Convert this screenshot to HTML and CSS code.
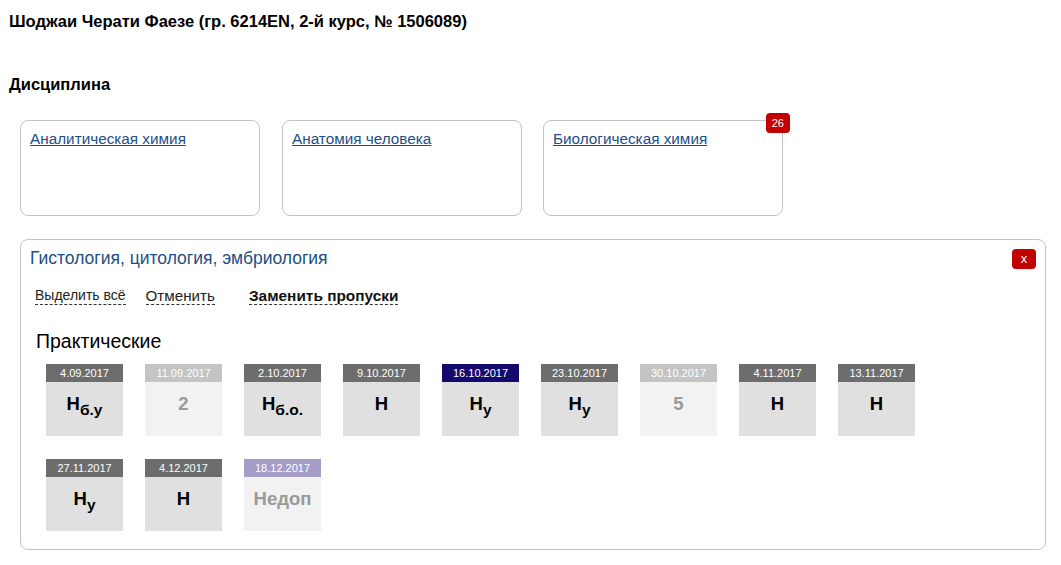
FILE: index.html
```html
<!DOCTYPE html>
<html lang="ru">
<head>
<meta charset="utf-8">
<link rel="stylesheet" href="styles.css">
</head>
<body>
<h1 class="student">Шоджаи Черати Фаезе (гр. 6214EN, 2-й курс, № 1506089)</h1>
<h2 class="section">Дисциплина</h2>
<div class="cards">
  <div class="card"><a href="#">Аналитическая химия</a></div>
  <div class="card"><a href="#">Анатомия человека</a></div>
  <div class="card"><a href="#">Биологическая химия</a><span class="badge">26</span></div>
</div>
<div class="panel">
  <div class="panel-head">
    <span class="panel-title">Гистология, цитология, эмбриология</span>
    <span class="close">x</span>
  </div>
  <div class="actions">
    <span class="act act-select">Выделить всё</span>
    <span class="act act-cancel">Отменить</span>
    <span class="act act-bold">Заменить пропуски</span>
  </div>
  <div class="group-title">Практические</div>
  <div class="tiles">
    <div class="tile"><div class="date">4.09.2017</div><div class="val">Н<sub>б.у</sub></div></div>
    <div class="tile light"><div class="date">11.09.2017</div><div class="val">2</div></div>
    <div class="tile"><div class="date">2.10.2017</div><div class="val">Н<sub>б.о.</sub></div></div>
    <div class="tile"><div class="date">9.10.2017</div><div class="val">Н</div></div>
    <div class="tile active"><div class="date">16.10.2017</div><div class="val">Н<sub>у</sub></div></div>
    <div class="tile"><div class="date">23.10.2017</div><div class="val">Н<sub>у</sub></div></div>
    <div class="tile light"><div class="date">30.10.2017</div><div class="val">5</div></div>
    <div class="tile"><div class="date">4.11.2017</div><div class="val">Н</div></div>
    <div class="tile"><div class="date">13.11.2017</div><div class="val">Н</div></div>
    <div class="tile"><div class="date">27.11.2017</div><div class="val">Н<sub>у</sub></div></div>
    <div class="tile"><div class="date">4.12.2017</div><div class="val">Н</div></div>
    <div class="tile light exam"><div class="date">18.12.2017</div><div class="val">Недоп</div></div>
  </div>
</div>
</body>
</html>
```

FILE: styles.css
```css
html, body {
  margin: 0;
  padding: 0;
  background: #fff;
}
body {
  font-family: "Liberation Sans", Arial, sans-serif;
  color: #000;
  padding: 12px 15px 0 9px;
}
.student {
  font-size: 16.5px;
  font-weight: bold;
  margin: 0;
  line-height: 19px;
}
.section {
  font-size: 16.5px;
  font-weight: bold;
  margin: 44px 0 0 0;
  line-height: 19px;
}
.cards {
  display: flex;
  gap: 22px;
  margin: 26px 0 0 11px;
}
.card {
  position: relative;
  width: 238px;
  height: 94px;
  border: 1px solid #c3c3c3;
  border-radius: 8px;
}
.card:last-child {
  margin-left: -1px;
}
.card a {
  display: inline-block;
  margin: 9px 0 0 9px;
  font-size: 15.3px;
  color: #1d4f86;
  text-decoration: underline;
  line-height: 18px;
}
.badge {
  position: absolute;
  top: -8px;
  right: -8px;
  background: #c20000;
  color: #fff;
  font-size: 11px;
  line-height: 20px;
  height: 20px;
  padding: 0 6px;
  border-radius: 4px;
}
.panel {
  margin: 23px 0 0 11px;
  border: 1px solid #c3c3c3;
  border-radius: 8px;
  padding: 8px 9px 18px 9px;
}
.panel-head {
  display: flex;
  justify-content: space-between;
  align-items: center;
}
.panel-title {
  font-size: 17.5px;
  color: #1d4f86;
  line-height: 21px;
}
.close {
  background: #c20000;
  color: #fff;
  font-size: 13px;
  width: 24px;
  height: 20px;
  line-height: 19px;
  text-align: center;
  border-radius: 4px;
}
.actions {
  display: flex;
  margin: 18px 0 0 5px;
}
.act {
  font-size: 14.5px;
  color: #222;
  line-height: 17px;
  border-bottom: 1px dashed #333;
}
.act-select {
  font-size: 14px;
  margin-right: 20px;
}
.act-cancel {
  font-size: 15.2px;
  margin-right: 34px;
}
.act-bold {
  font-weight: bold;
  font-size: 15.4px;
  color: #111;
}
.group-title {
  font-size: 19.5px;
  margin: 25px 0 0 6px;
  line-height: 22px;
}
.tiles {
  display: flex;
  flex-wrap: wrap;
  column-gap: 22px;
  row-gap: 23px;
  margin: 12px 0 0 16px;
  width: 900px;
}
.tile {
  width: 77px;
  display: flex;
  flex-direction: column;
}
.date {
  height: 18px;
  line-height: 18px;
  background: #6d6d6d;
  color: #fff;
  font-size: 11px;
  text-align: center;
}
.val {
  height: 54px;
  background: #e0e0e0;
  color: #000;
  font-size: 18.5px;
  font-weight: bold;
  text-align: center;
  line-height: 44px;
}
.val sub {
  font-size: 15.5px;
  vertical-align: -5px;
  line-height: 0;
}
.light .date {
  background: #c4c4c4;
}
.light .val {
  background: #f2f2f2;
  color: #9a9a9a;
}
.active .date {
  background: #140a6e;
}
.exam .date {
  background: #a59dc8;
}
```
